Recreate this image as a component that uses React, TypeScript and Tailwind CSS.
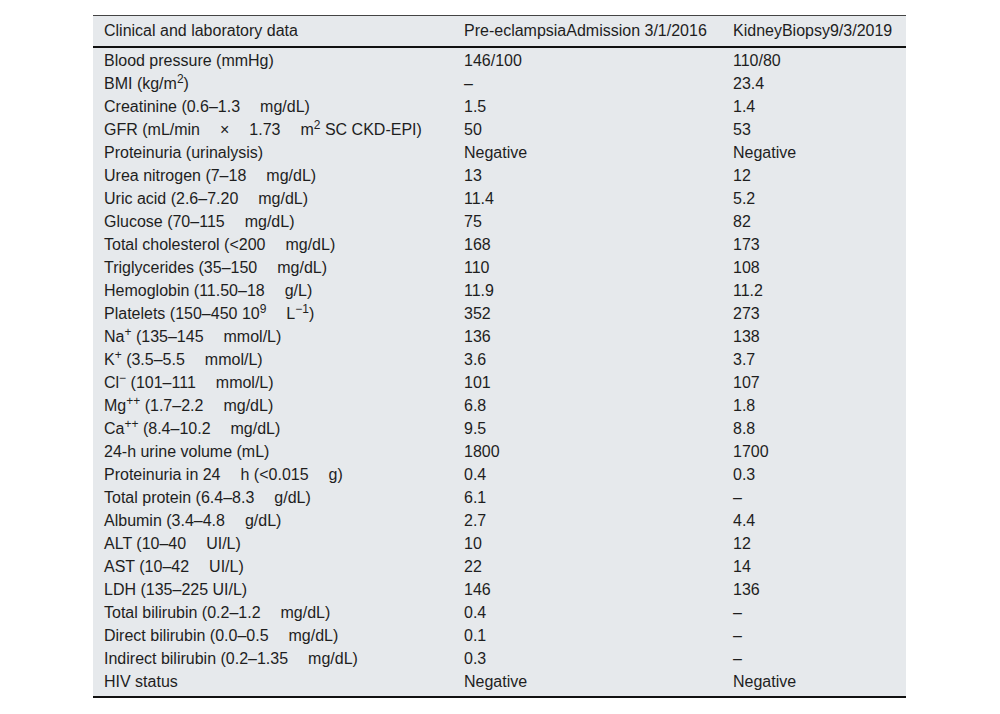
import * as React from "react"

const G = "\u2003\u2005"

type Row = {
  label: React.ReactNode
  pre: string
  biopsy: string
}

const rows: Row[] = [
  { label: "Blood pressure (mmHg)", pre: "146/100", biopsy: "110/80" },
  { label: <>BMI (kg/m<sup>2</sup>)</>, pre: "–", biopsy: "23.4" },
  { label: `Creatinine (0.6–1.3${G}mg/dL)`, pre: "1.5", biopsy: "1.4" },
  {
    label: (
      <>
        GFR (mL/min{G}×{G}1.73{G}m<sup>2</sup> SC CKD-EPI)
      </>
    ),
    pre: "50",
    biopsy: "53",
  },
  { label: "Proteinuria (urinalysis)", pre: "Negative", biopsy: "Negative" },
  { label: `Urea nitrogen (7–18${G}mg/dL)`, pre: "13", biopsy: "12" },
  { label: `Uric acid (2.6–7.20${G}mg/dL)`, pre: "11.4", biopsy: "5.2" },
  { label: `Glucose (70–115${G}mg/dL)`, pre: "75", biopsy: "82" },
  { label: `Total cholesterol (<200${G}mg/dL)`, pre: "168", biopsy: "173" },
  { label: `Triglycerides (35–150${G}mg/dL)`, pre: "110", biopsy: "108" },
  { label: `Hemoglobin (11.50–18${G}g/L)`, pre: "11.9", biopsy: "11.2" },
  {
    label: (
      <>
        Platelets (150–450 10<sup>9</sup>
        {G}L<sup>−1</sup>)
      </>
    ),
    pre: "352",
    biopsy: "273",
  },
  { label: <>Na<sup>+</sup> (135–145{G}mmol/L)</>, pre: "136", biopsy: "138" },
  { label: <>K<sup>+</sup> (3.5–5.5{G}mmol/L)</>, pre: "3.6", biopsy: "3.7" },
  { label: <>Cl<sup>−</sup> (101–111{G}mmol/L)</>, pre: "101", biopsy: "107" },
  { label: <>Mg<sup>++</sup> (1.7–2.2{G}mg/dL)</>, pre: "6.8", biopsy: "1.8" },
  { label: <>Ca<sup>++</sup> (8.4–10.2{G}mg/dL)</>, pre: "9.5", biopsy: "8.8" },
  { label: "24-h urine volume (mL)", pre: "1800", biopsy: "1700" },
  { label: `Proteinuria in 24${G}h (<0.015${G}g)`, pre: "0.4", biopsy: "0.3" },
  { label: `Total protein (6.4–8.3${G}g/dL)`, pre: "6.1", biopsy: "–" },
  { label: `Albumin (3.4–4.8${G}g/dL)`, pre: "2.7", biopsy: "4.4" },
  { label: `ALT (10–40${G}UI/L)`, pre: "10", biopsy: "12" },
  { label: `AST (10–42${G}UI/L)`, pre: "22", biopsy: "14" },
  { label: "LDH (135–225 UI/L)", pre: "146", biopsy: "136" },
  { label: `Total bilirubin (0.2–1.2${G}mg/dL)`, pre: "0.4", biopsy: "–" },
  { label: `Direct bilirubin (0.0–0.5${G}mg/dL)`, pre: "0.1", biopsy: "–" },
  { label: `Indirect bilirubin (0.2–1.35${G}mg/dL)`, pre: "0.3", biopsy: "–" },
  { label: "HIV status", pre: "Negative", biopsy: "Negative" },
]

export default function App() {
  return (
    <div
      className="min-h-[714px] w-[1000px] bg-white pt-[15px] text-[16px] text-[#1e1e1e]"
      style={{ fontFamily: '"Liberation Sans", Arial, sans-serif' }}
    >
      <div className="ml-[93px] w-[813px] border-t border-b-2 border-t-[#444] border-b-[#111] bg-[#e6e9ec] pb-[4px]">
        <div className="flex h-[32px] items-center border-b-2 border-[#111] pb-[1px]">
          <div className="w-[360px] pl-[11px]">Clinical and laboratory data</div>
          <div className="w-[269px] pl-[11px]">Pre-eclampsiaAdmission 3/1/2016</div>
          <div className="flex-1 pl-[11px]">KidneyBiopsy9/3/2019</div>
        </div>
        {rows.map((r, i) => (
          <div key={i} className="flex h-[23px] items-start leading-[25px]">
            <div className="w-[360px] pl-[11px] whitespace-pre">{r.label}</div>
            <div className="w-[269px] pl-[11px]">{r.pre}</div>
            <div className="flex-1 pl-[11px]">{r.biopsy}</div>
          </div>
        ))}
      </div>
    </div>
  )
}
